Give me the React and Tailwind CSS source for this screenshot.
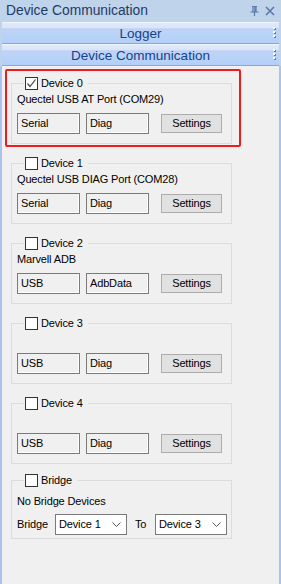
import React from "react";

const font = { fontFamily: '"Liberation Sans", Arial, sans-serif' };

function Check({ checked }) {
  return (
    <span className="inline-flex h-[13px] w-[13px] items-center justify-center border border-[#333333] bg-white">
      {checked && (
        <svg width="11" height="11" viewBox="0 0 11 11">
          <path d="M1.5 5.5 L4 8.5 L9.5 1.5" fill="none" stroke="#444" strokeWidth="1.2" />
        </svg>
      )}
    </span>
  );
}

function Box({ children }) {
  return (
    <div className="flex h-[21px] w-[63px] items-center border border-[#7a7a7a] bg-[#f0f0f0] pl-[3px] shadow-[inset_-1px_-1px_0_#ffffff]">
      {children}
    </div>
  );
}

function Btn() {
  return (
    <div className="ml-[12px] flex h-[19px] w-[61px] items-center justify-center border border-[#adadad] bg-[#e1e1e1]">
      Settings
    </div>
  );
}

function Legend({ checked, label }) {
  return (
    <legend className="ml-[7px] flex items-center px-[1px] pr-[5px]">
      <Check checked={checked} />
      <span className="ml-[3px] leading-[13px]">{label}</span>
    </legend>
  );
}

function Group({ first, idx, checked, label, a, b }) {
  return (
    <div
      className={
        "mb-[2px] w-[236px] border-2 pb-[1px] pl-[4px] pt-[6px] " +
        (first ? "border-[#ee1c1c] rounded-[2px]" : "border-transparent")
      }
    >
      <fieldset className="w-[221px] border border-[#dcdcdc] pb-[9px] pl-[5px]">
        <Legend checked={checked} label={"Device " + idx} />
        <div className="mt-[2px] h-[15px] leading-[15px]">{label}</div>
        <div className="mt-[6px] flex items-center">
          <Box>{a}</Box>
          <div className="w-[6px]" />
          <Box>{b}</Box>
          <Btn />
        </div>
      </fieldset>
    </div>
  );
}

function Select({ value }) {
  return (
    <div className="flex h-[21px] w-[72px] items-center justify-between border border-[#7a7a7a] bg-white pl-[3px] pr-[5px]">
      <span>{value}</span>
      <svg width="9" height="6" viewBox="0 0 9 6">
        <path d="M0.5 0.5 L4.5 4.5 L8.5 0.5" fill="none" stroke="#555" strokeWidth="1" />
      </svg>
    </div>
  );
}

function Tab({ label }) {
  return (
    <div className="relative mx-[2px] flex h-[22px] items-center justify-center border-b border-[#8ba6d2] border-t border-t-[#eef5ff] bg-[linear-gradient(to_bottom,#dfeafb_0px,#d6e5fa_5px,#c8c3f0_6px,#bcd5f8_7px,#b4cff7_20px)] text-[13.5px] text-[#15428b]">
      <span className="mt-[2px]">{label}</span>
      <div className="absolute right-[4px] top-[4px] flex flex-col gap-[2px]">
        <span className="h-[2px] w-[2px] bg-[#fbfdff] shadow-[1px_1px_0_#5b7fc0]" />
        <span className="h-[2px] w-[2px] bg-[#fbfdff] shadow-[1px_1px_0_#5b7fc0]" />
        <span className="h-[2px] w-[2px] bg-[#fbfdff] shadow-[1px_1px_0_#5b7fc0]" />
      </div>
    </div>
  );
}

export default function App() {
  return (
    <div style={font} className="flex h-[584px] w-[281px] flex-col bg-[#a9c4ec] text-[11px] text-black">
      <div className="flex h-[22px] shrink-0 items-center bg-[#bfd3eb] pl-[6px] pr-[5px] text-[13.8px] text-[#1e3a66]">
        <span className="flex-1">Device Communication</span>
        <svg width="9" height="10" viewBox="0 0 9 10" className="mr-[6px]">
          <path d="M2 0.5 H7 M3 0.5 V6 M6 0.5 V6 M0.5 6 H8.5 M4.5 6 V10" fill="none" stroke="#5a79a8" strokeWidth="1.2" />
          <path d="M5 1 V6" stroke="#5a79a8" strokeWidth="1.5" />
        </svg>
        <svg width="10" height="10" viewBox="0 0 10 10" className="mr-[1px]">
          <path d="M1 1 L9 9 M9 1 L1 9" stroke="#5a79a8" strokeWidth="1.6" />
        </svg>
      </div>
      <div className="bg-[#bfd3eb]">
        <Tab label="Logger" />
        <Tab label="Device Communication" />
      </div>
      <div className="mx-[2px] flex-1 bg-[#f0f0f0] pl-[3px] pt-[3px] tracking-[-0.15px]">
        <Group first idx={0} checked label="Quectel USB AT Port (COM29)" a="Serial" b="Diag" />
        <Group idx={1} label="Quectel USB DIAG Port (COM28)" a="Serial" b="Diag" />
        <Group idx={2} label="Marvell ADB" a="USB" b="AdbData" />
        <Group idx={3} label="" a="USB" b="Diag" />
        <Group idx={4} label="" a="USB" b="Diag" />
        <div className="w-[236px] border-2 border-transparent pl-[4px] pt-[3px]">
          <fieldset className="w-[221px] border border-[#dcdcdc] pb-[3px] pl-[5px]">
            <legend className="ml-[7px] flex items-center px-[1px] pr-[5px]">
              <Check />
              <span className="ml-[3px] leading-[13px]">Bridge</span>
            </legend>
            <div className="mt-[7px] h-[15px] leading-[15px]">No Bridge Devices</div>
            <div className="mt-[5px] flex items-center">
              <span className="w-[38px]">Bridge</span>
              <Select value="Device 1" />
              <span className="ml-[8px] w-[20px]">To</span>
              <Select value="Device 3" />
            </div>
          </fieldset>
        </div>
      </div>
    </div>
  );
}
